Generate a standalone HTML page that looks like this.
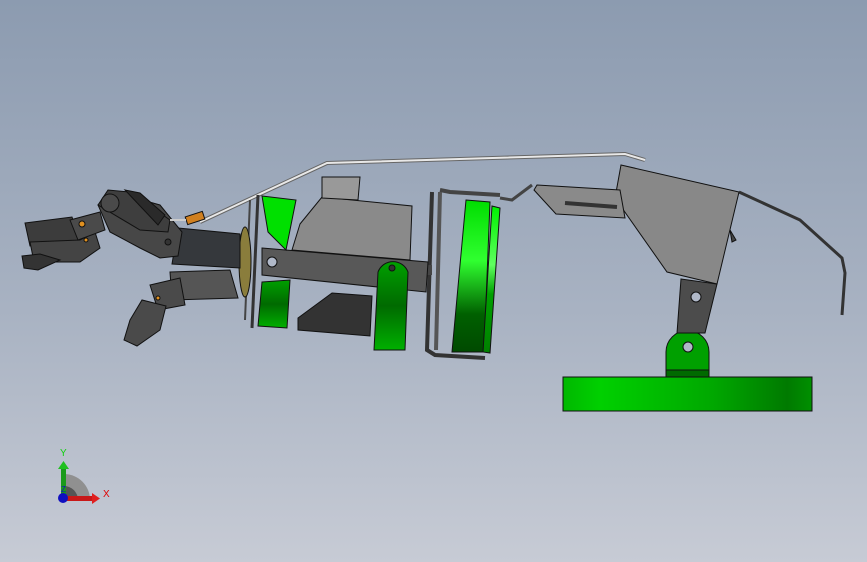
<!DOCTYPE html>
<html><head><style>
html,body{margin:0;padding:0;width:867px;height:562px;overflow:hidden}
body{background:linear-gradient(#8c9bb0,#a8b2c2 55%,#c7cbd5)}
svg{position:absolute;left:0;top:0}
</style></head><body>
<svg width="867" height="562" viewBox="0 0 867 562">
<defs>
<linearGradient id="gb" x1="0" x2="1"><stop offset="0" stop-color="#00b800"/><stop offset=".15" stop-color="#00d000"/><stop offset=".6" stop-color="#00a800"/><stop offset=".9" stop-color="#007a00"/><stop offset="1" stop-color="#009000"/></linearGradient>
<linearGradient id="gr" x1="0" y1="0" x2="0" y2="1"><stop offset="0" stop-color="#00dd00"/><stop offset=".4" stop-color="#30ff30"/><stop offset=".75" stop-color="#006000"/><stop offset="1" stop-color="#004a00"/></linearGradient>
<linearGradient id="gf" x1="0" y1="0" x2="0" y2="1"><stop offset="0" stop-color="#00f000"/><stop offset=".4" stop-color="#60ff60"/><stop offset=".6" stop-color="#00a000"/><stop offset="1" stop-color="#008000"/></linearGradient>
<linearGradient id="gs" x1="0" y1="0" x2="0" y2="1"><stop offset="0" stop-color="#00a000"/><stop offset=".5" stop-color="#006a00"/><stop offset="1" stop-color="#00b000"/></linearGradient>
</defs>
<g stroke="#111" stroke-width="1">
<polyline points="200,222 327,163 625,154 645,160" fill="none" stroke="#666" stroke-width="4"/>
<polyline points="200,222 327,163 625,154 645,160" fill="none" stroke="#e8e8e8" stroke-width="2"/>
<polyline points="739,192 800,220 842,258 845,273 842,315" fill="none" stroke="#333" stroke-width="3"/>
<rect x="563" y="377" width="249" height="34" fill="url(#gb)"/>
<path d="M666,377 V352 A21,21 0 0 1 709,352 V377 Z" fill="#00a000"/>
<rect x="666" y="370" width="43" height="7" fill="#006a00"/>
<circle cx="688" cy="347" r="5" fill="#b0b8c8"/>
<polygon points="681,279 717,284 705,333 677,333" fill="#4c4c4c"/>
<circle cx="696" cy="297" r="5" fill="#b0b8c8"/>
<polygon points="621,165 739,192 717,284 667,272 615,198" fill="#888"/>
<polygon points="730,230 736,240 732,242" fill="#444"/>
<polygon points="537,185 620,190 625,218 556,214 534,190" fill="#8a8a8a"/>
<line x1="565" y1="203" x2="617" y2="207" stroke="#333" stroke-width="4"/>
<polyline points="500,198 512,200 532,185" fill="none" stroke="#444" stroke-width="3"/>
<polyline points="440,190 450,192 500,195" fill="none" stroke="#444" stroke-width="4"/>
<polyline points="432,192 427,350 435,355 485,358" fill="none" stroke="#333" stroke-width="4"/>
<line x1="440" y1="192" x2="436" y2="350" stroke="#555" stroke-width="4"/>
<line x1="422" y1="270" x2="432" y2="270" stroke="#444" stroke-width="10"/>
<path d="M466,200 L490,202 L484,352 L452,352 Z" fill="url(#gr)"/>
<path d="M492,206 L500,208 L490,353 L483,352 Z" fill="url(#gf)"/>
<polygon points="300,224 322,197 412,206 410,260 292,250" fill="#8a8a8a"/>
<polygon points="322,177 360,177 358,200 322,198" fill="#999"/>
<polygon points="298,318 332,293 372,296 370,336 298,330" fill="#333"/>
<polygon points="262,248 428,262 426,292 262,275" fill="#585858"/>
<circle cx="272" cy="262" r="5" fill="#b0b8c8"/>
<path d="M374,350 L378,272 A16,16 0 0 1 408,272 L405,350 Z" fill="url(#gs)"/>
<circle cx="392" cy="268" r="3" fill="#333"/>
<path d="M262,196 L296,200 L286,250 L268,232 Z" fill="#00e000"/>
<path d="M262,282 L290,280 L287,328 L258,326 Z" fill="url(#gs)"/>
<line x1="258" y1="195" x2="252" y2="328" stroke="#333" stroke-width="3"/>
<line x1="250" y1="200" x2="245" y2="320" stroke="#444" stroke-width="2"/>
<ellipse cx="245" cy="262" rx="6" ry="35" fill="#8a7d3c"/>
<!-- wrist -->
<polygon points="178,228 240,234 240,268 172,264" fill="#35383c"/>
<!-- link bar -->
<polygon points="128,196 160,205 182,232 178,256 160,258 140,248 110,232 98,205" fill="#474747"/>
<polygon points="98,205 108,190 130,192 170,220 168,232 140,230" fill="#3e3e3e"/>
<circle cx="110" cy="203" r="9" fill="#4a4a4a"/>
<circle cx="168" cy="242" r="3" fill="#333"/>
<polygon points="125,190 140,193 165,215 158,225" fill="#2a2a2a"/>
<!-- cylinder -->
<rect x="186" y="214" width="18" height="8" fill="#d08020" transform="rotate(-18 195 218)"/>
<line x1="170" y1="220" x2="186" y2="220" stroke="#ccc" stroke-width="2"/>
<!-- upper fingers -->
<polygon points="25,223 72,217 80,240 30,246" fill="#3c3c3c"/>
<polygon points="30,242 80,240 95,232 100,248 80,262 34,262" fill="#444"/>
<polygon points="22,256 40,254 60,260 38,270 24,268" fill="#333"/>
<polygon points="70,220 100,212 105,230 78,240" fill="#4a4a4a"/>
<circle cx="82" cy="224" r="3" fill="#e09020"/>
<circle cx="86" cy="240" r="2" fill="#e09020"/>
<!-- thumb -->
<polygon points="170,272 230,270 238,298 172,300" fill="#555"/>
<polygon points="150,285 180,278 185,305 158,310" fill="#4a4a4a"/>
<polygon points="130,320 142,300 166,306 160,330 137,346 124,340" fill="#4a4a4a"/>
<circle cx="158" cy="298" r="2" fill="#e09020"/>
</g>
<g>
<path d="M64,500 L64,474 A26,26 0 0 1 90,500 Z" fill="#909090"/>
<path d="M64,500 L64,486 A14,14 0 0 1 78,500 Z" fill="#555"/>
<rect x="61" y="467" width="5" height="33" fill="#1a9a1a"/>
<polygon points="58,469 63.5,461 69,469" fill="#20c020"/>
<rect x="64" y="496" width="28" height="5" fill="#c81818"/>
<polygon points="92,493 100,498.5 92,504" fill="#e02020"/>
<circle cx="63" cy="498" r="5" fill="#1010c0"/>
<text x="60" y="456" font-family="Liberation Sans,sans-serif" font-size="10" fill="#10d010">Y</text>
<text x="103" y="497" font-family="Liberation Sans,sans-serif" font-size="10" fill="#e00000">X</text>
<text x="61" y="492" font-family="Liberation Sans,sans-serif" font-size="8" fill="#1010c0">Z</text>
</g>
</svg>
</body></html>
